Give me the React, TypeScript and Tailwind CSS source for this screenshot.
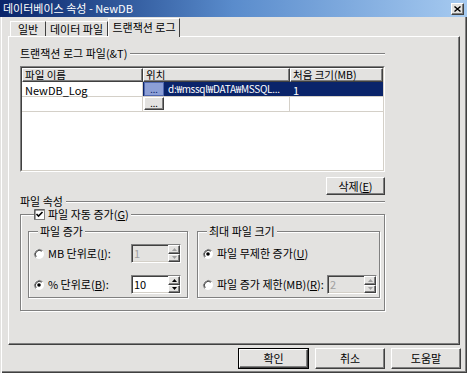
import React from 'react';

const raised =
  'border border-t-white border-l-white border-r-[#404040] border-b-[#404040] shadow-[inset_-1px_-1px_0_#808080]';
const sunken =
  'border border-t-[#808080] border-l-[#808080] border-r-white border-b-white shadow-[inset_1px_1px_0_#404040,inset_-1px_-1px_0_#d4d0c8]';
const etched = 'border border-[#808080] shadow-[inset_1px_1px_0_#fff,1px_1px_0_#fff]';

const Radio = ({ checked }: { checked?: boolean }) => (
  <svg width="12" height="12" viewBox="0 0 12 12" className="shrink-0">
    <circle cx="6" cy="6" r="5" fill="#fff" />
    <path d="M9.5 2.5 A5 5 0 0 0 2.5 9.5" stroke="#808080" strokeWidth="1" fill="none" />
    <path d="M8.8 3.2 A4 4 0 0 0 3.2 8.8" stroke="#404040" strokeWidth="1" fill="none" />
    {checked && <circle cx="6" cy="6" r="1.8" fill="#000" />}
  </svg>
);

const Check = () => (
  <svg width="11" height="11" viewBox="0 0 11 11" className="shrink-0">
    <rect x="0.5" y="0.5" width="10" height="10" fill="#fff" stroke="#808080" />
    <path d="M1 1 H10 M1 1 V10" stroke="#404040" />
    <path d="M2.5 5 L4.5 7 L8.5 3" stroke="#000" strokeWidth="1.6" fill="none" />
  </svg>
);

const Arrow = ({ up, disabled }: { up?: boolean; disabled?: boolean }) => (
  <div className={`flex flex-1 items-center justify-center bg-[#e3e2e0] ${raised}`}>
    <svg width="5" height="3" viewBox="0 0 5 3">
      <path d={up ? 'M2.5 0 L5 3 L0 3 Z' : 'M0 0 L5 0 L2.5 3 Z'} fill={disabled ? '#a0a0a0' : '#000'} />
    </svg>
  </div>
);

const Spin = ({ value, disabled }: { value: string; disabled?: boolean }) => (
  <div className={`flex h-[19px] w-[50px] shrink-0 ${sunken} ${disabled ? 'bg-[#e3e2e0]' : 'bg-white'}`}>
    <span className={`flex-1 pl-[2px] pt-[1px] text-[11px] leading-[14px] ${disabled ? 'text-[#a0a0a0]' : 'text-black'}`}>
      {value}
    </span>
    <div className="flex w-[12px] flex-col">
      <Arrow up disabled={disabled} />
      <Arrow disabled={disabled} />
    </div>
  </div>
);

const Button = ({ children, className = '' }: { children: React.ReactNode; className?: string }) => (
  <div className={`flex items-center justify-center bg-[#e3e2e0] text-[11px] ${raised} ${className}`}>{children}</div>
);

const Heading = ({ children }: { children: React.ReactNode }) => (
  <div className="flex h-[13px] items-center gap-[3px]">
    <span className="leading-[13px]">{children}</span>
    <div className="h-0 flex-1 border-t border-b border-t-[#808080] border-b-white" />
  </div>
);

export default function App() {
  return (
    <div className="h-[373px] w-[467px] bg-[#e3e2e0] font-['Noto_Sans_CJK_KR','Liberation_Sans',sans-serif] text-[11px] text-black shadow-[inset_1px_0_0_#e3e2e0,inset_2px_0_0_#fff,inset_-1px_-1px_0_#404040,inset_-2px_-2px_0_#808080]">
      {/* title bar */}
      <div className="flex h-[17px] items-center bg-gradient-to-r from-[#0a246a] via-[#5a8ccc] to-[#a6caf0] pl-[3px] pr-[3px]">
        <span className="text-[11px] leading-[13px] text-white">데이터베이스 속성 - NewDB</span>
        <div className={`ml-auto flex h-[12px] w-[13px] items-center justify-center bg-[#e3e2e0] ${raised}`}>
          <svg width="7" height="6" viewBox="0 0 7 6">
            <path d="M0.5 0.5 L6.5 5.5 M6.5 0.5 L0.5 5.5" stroke="#000" strokeWidth="1.4" />
          </svg>
        </div>
      </div>

      <div className="flex flex-col pl-[8px] pr-[6px]">
        {/* tabs */}
        <div className="relative z-10 flex h-[19px] items-end pl-[2px]">
          <div className="flex h-[15px] w-[36px] items-center justify-center border-t border-l border-r border-t-white border-l-white border-r-[#404040] leading-[13px]">
            일반
          </div>
          <div className="flex h-[15px] w-[62px] items-center justify-center border-t border-r border-t-white border-r-[#404040] leading-[13px]">
            데이터 파일
          </div>
          <div className="-mb-px flex h-[19px] w-[72px] items-start justify-center border-t border-l border-r border-t-white border-l-white border-r-[#404040] bg-[#e3e2e0] pt-[2px] leading-[13px]">
            트랜잭션 로그
          </div>
        </div>

        {/* panel */}
        <div className="mr-px flex h-[309px] flex-col border border-t-white border-l-white border-r-[#404040] border-b-[#404040] pl-[11px] pt-[10px] shadow-[inset_-1px_-1px_0_#808080]">
          <div className="flex w-[365px] flex-col">
            <Heading>
              트랜잭션 로그 파일(&amp;T)
            </Heading>

            {/* table */}
            <div className="mt-[6px] h-[106px] border border-t-[#808080] border-l-[#808080] border-r-white border-b-white">
              <div className="flex h-full flex-col border border-t-[#404040] border-l-[#404040] border-r-[#d4d0c8] border-b-[#d4d0c8] bg-white">
                <div className="flex h-[14px] bg-[#e3e2e0] text-[10.5px] leading-[11px]">
                  <div className={`w-[121px] pl-[2px] ${raised}`}>파일 이름</div>
                  <div className={`w-[147px] pl-[2px] ${raised}`}>위치</div>
                  <div className={`flex-1 pl-[2px] ${raised}`}>처음 크기(MB)</div>
                </div>
                <div className="flex h-[15px] items-end border-b border-[#d4d0c8] leading-[12px]">
                  <div className="h-full w-[121px] border-r border-[#d4d0c8] pl-[3px] pt-[2px]">NewDB_Log</div>
                  <div className="flex h-full w-[147px] items-center overflow-hidden whitespace-nowrap bg-[#0a246a] text-white">
                    <div className="ml-[1px] flex h-[14px] w-[20px] shrink-0 items-end justify-center border border-[#5068b0] bg-[#8c9fd6] text-[9px] leading-[10px] text-[#0a246a]">
                      ...
                    </div>
                    <span className="ml-[4px] text-[10px] tracking-[-0.3px]">d:₩mssql₩DATA₩MSSQL...</span>
                  </div>
                  <div className="h-full flex-1 bg-[#0a246a] pl-[3px] pt-[2px] text-white">1</div>
                </div>
                <div className="flex h-[15px] border-b border-[#d4d0c8]">
                  <div className="w-[121px] border-r border-[#d4d0c8]" />
                  <div className="flex w-[147px] items-start border-r border-[#d4d0c8]">
                    <div className={`ml-[1px] flex h-[13px] w-[20px] items-end justify-center bg-[#e3e2e0] text-[9px] leading-[10px] ${raised}`}>
                      ...
                    </div>
                  </div>
                  <div className="flex-1" />
                </div>
              </div>
            </div>

            <div className="mt-[5px] flex justify-end">
              <Button className="h-[18px] w-[59px]">
                삭제(<span className="underline">E</span>)
              </Button>
            </div>

            <Heading>파일 속성</Heading>

            {/* auto grow group */}
            <fieldset className={`h-[103px] pl-[7px] pr-[4px] ${etched}`}>
              <legend className="ml-[6px] flex items-center gap-[3px] bg-[#e3e2e0] pr-[2px] leading-[13px]">
                <Check />
                <span>파일 자동 증가(<span className="underline">G</span>)</span>
              </legend>
              <div className="mt-[4px] flex gap-[9px]">
                <fieldset className={`h-[73px] w-[160px] pl-[4px] pr-[6px] ${etched}`}>
                  <legend className="ml-[5px] bg-[#e3e2e0] px-[2px] leading-[13px]">파일 증가</legend>
                  <div className="mt-[6px] flex flex-col gap-[12px]">
                    <div className="flex items-center">
                      <Radio />
                      <span className="ml-[3px]">MB 단위로(<span className="underline">I</span>):</span>
                      <div className="ml-auto">
                        <Spin value="1" disabled />
                      </div>
                    </div>
                    <div className="flex items-center">
                      <Radio checked />
                      <span className="ml-[3px]">% 단위로(<span className="underline">B</span>):</span>
                      <div className="ml-auto">
                        <Spin value="10" />
                      </div>
                    </div>
                  </div>
                </fieldset>
                <fieldset className={`h-[73px] w-[183px] pl-[4px] pr-[2px] ${etched}`}>
                  <legend className="ml-[5px] bg-[#e3e2e0] px-[2px] leading-[13px]">최대 파일 크기</legend>
                  <div className="mt-[6px] flex flex-col gap-[12px]">
                    <div className="flex h-[19px] items-center">
                      <Radio checked />
                      <span className="ml-[3px]">파일 무제한 증가(<span className="underline">U</span>)</span>
                    </div>
                    <div className="flex items-center">
                      <Radio />
                      <span className="ml-[3px]">파일 증가 제한(MB)(<span className="underline">R</span>):</span>
                      <div className="ml-auto">
                        <Spin value="2" disabled />
                      </div>
                    </div>
                  </div>
                </fieldset>
              </div>
            </fieldset>
          </div>
        </div>

        {/* dialog buttons */}
        <div className="mt-[3px] flex justify-end gap-[6px]">
          <div className="border border-black">
            <Button className="h-[19px] w-[69px]">확인</Button>
          </div>
          <Button className="h-[21px] w-[70px]">취소</Button>
          <Button className="h-[21px] w-[70px]">도움말</Button>
        </div>
      </div>
    </div>
  );
}
